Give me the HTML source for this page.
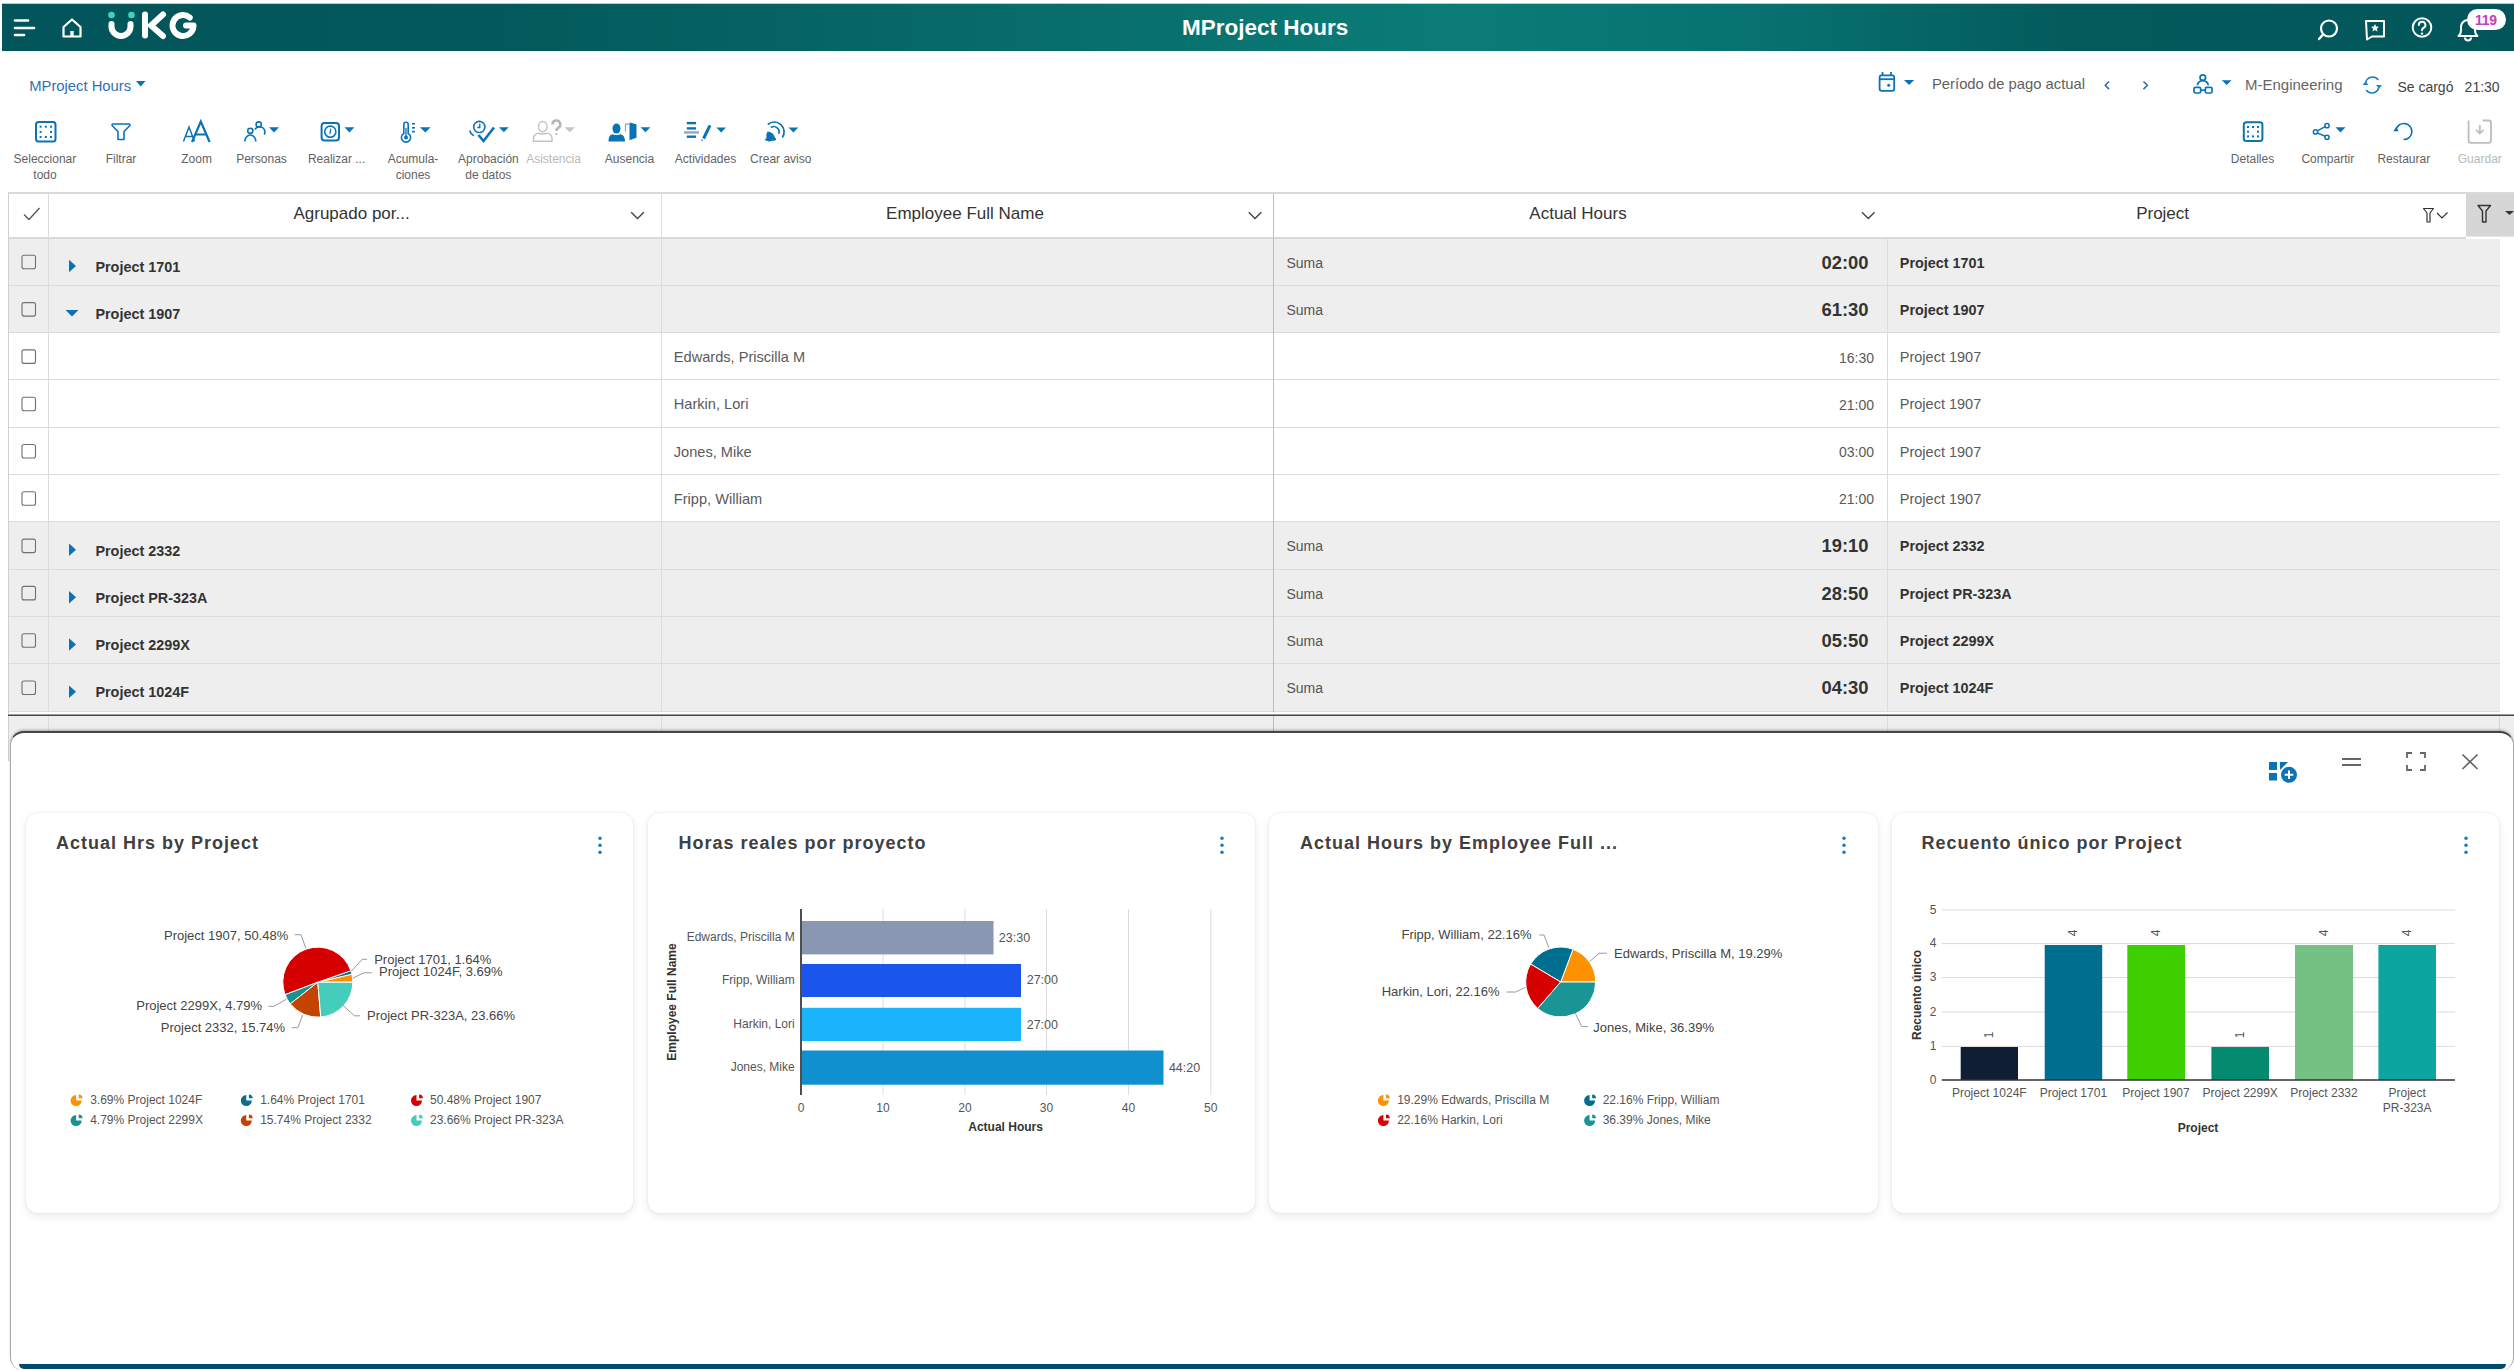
<!DOCTYPE html>
<html><head><meta charset="utf-8">
<style>
*{box-sizing:border-box}
html,body{margin:0;padding:0;width:2514px;height:1370px;overflow:hidden;background:#fff;font-family:"Liberation Sans",sans-serif;color:#333}
.a{position:absolute}
.t{position:absolute;white-space:nowrap;line-height:1}
#hdr{position:absolute;left:2px;top:4px;width:2512px;height:47px;box-shadow:0 -1px 0 rgba(120,150,150,.5);background:linear-gradient(90deg,#02555a 0%,#03595b 20%,#0b7c77 58%,#077270 70%,#035b5c 82%,#02565a 100%)}
.lbl{position:absolute;white-space:nowrap;font-size:12px;color:#555;line-height:16px;text-align:center}
.ic{position:absolute}
</style></head><body>
<!-- HEADER -->
<div id="hdr"></div>
<svg class="a" style="left:0;top:0" width="2514" height="52" viewBox="0 0 2514 52">
  <!-- hamburger -->
  <g stroke="#fff" stroke-width="2.6" stroke-linecap="round">
    <line x1="15" y1="20.5" x2="28" y2="20.5"/>
    <line x1="15" y1="28" x2="34" y2="28"/>
    <line x1="15" y1="35" x2="24" y2="35"/>
  </g>
  <!-- home -->
  <path d="M63.5 36.5 V27 L72 19.5 L80.5 27 V36.5 Z" fill="none" stroke="#fff" stroke-width="2.2" stroke-linejoin="round"/>
  <rect x="70.3" y="31" width="3.4" height="6" fill="#fff"/>
  <!-- UKG logo -->
  <circle cx="111.5" cy="15" r="3.3" fill="#3fd3bb"/>
  <circle cx="131.5" cy="15" r="3.3" fill="#3fd3bb"/>
  <path d="M111.5 24 V26.5 A9.5 9.5 0 0 0 130.5 26.5 V24" fill="none" stroke="#fff" stroke-width="6" stroke-linecap="round"/>
  <line x1="145" y1="14.5" x2="145" y2="35.5" stroke="#fff" stroke-width="6" stroke-linecap="round"/>
  <path d="M163 14.5 L151 25.5 L163 36" fill="none" stroke="#fff" stroke-width="6" stroke-linecap="round" stroke-linejoin="round"/>
  <path d="M189.75 17.46 A10.5 10.5 0 1 0 193.5 25.5 H186" fill="none" stroke="#fff" stroke-width="6" stroke-linecap="round" stroke-linejoin="round"/>
  <!-- right icons -->
  <circle cx="2329" cy="28.5" r="8" fill="none" stroke="#fff" stroke-width="2.2"/>
  <line x1="2323" y1="34.5" x2="2319" y2="39" stroke="#fff" stroke-width="2.4" stroke-linecap="round"/>
  <path d="M2366 21 H2384 V36.5 H2372 L2367 39.5 Z" fill="none" stroke="#fff" stroke-width="2" stroke-linejoin="round"/>
  <path d="M2375 24 l1.2 2.5 2.7 .3 -2 1.9 .5 2.7 -2.4 -1.3 -2.4 1.3 .5 -2.7 -2 -1.9 2.7 -.3z" fill="#fff"/>
  <circle cx="2422" cy="27.5" r="9.3" fill="none" stroke="#fff" stroke-width="2"/>
  <path d="M2418.8 25 a3.3 3.3 0 1 1 4.6 3 c-1 .5 -1.4 1.1 -1.4 2.3" fill="none" stroke="#fff" stroke-width="2" stroke-linecap="round"/>
  <circle cx="2422" cy="33.6" r="1.2" fill="#fff"/>
  <path d="M2458.5 36 c2 -1.5 2.5 -3 2.5 -6 v-3 a7 7 0 0 1 14 0 v3 c0 3 .5 4.5 2.5 6 z" fill="none" stroke="#fff" stroke-width="2" stroke-linejoin="round"/>
  <path d="M2465 37.5 a3 3 0 0 0 6 0" fill="none" stroke="#fff" stroke-width="2"/>
  <rect x="2467" y="9" width="39" height="21" rx="10.5" fill="#fff"/>
</svg>
<div class="t" style="left:1182px;top:17px;font-size:22.5px;font-weight:700;color:#fff">MProject Hours</div>
<div class="t" style="left:2475px;top:12.5px;font-size:14px;font-weight:700;color:#c93bb8;letter-spacing:-0.3px">119</div>

<!-- TOOLBAR -->
<svg class="a" style="left:0;top:60px" width="2514" height="95" viewBox="0 60 2514 95">
<g fill="#0a73b5">
  <path d="M136 81 h9.5 l-4.75 5.5z"/>
  <!-- row1 triangles -->
  <path d="M1904 80 h10.2 l-5.1 5z"/>
  <path d="M2221.8 80.2 h9.8 l-4.9 4.8z"/>
  <!-- row2 triangles -->
  <path d="M269 127.3 h10 l-5 5.3z"/>
  <path d="M344.5 127.3 h9.8 l-4.9 5.3z"/>
  <path d="M420 127.3 h10.6 l-5.3 5.3z"/>
  <path d="M499 127.3 h9.7 l-4.85 5z"/>
  <path d="M640.6 127.3 h9.7 l-4.85 5z"/>
  <path d="M716.4 127.5 h9.6 l-4.8 5z"/>
  <path d="M788.5 127.5 h9.8 l-4.9 5z"/>
  <path d="M2335.5 127.3 h10 l-5 5.2z"/>
</g>
<path d="M564.5 127.3 h10.5 l-5.25 5z" fill="#c4c4c4"/>
<!-- calendar -->
<g stroke="#0a73b5" fill="none" stroke-width="1.8">
  <rect x="1879.6" y="75.4" width="14.6" height="15.4" rx="2"/>
  <line x1="1879.6" y1="79.2" x2="1894.2" y2="79.2"/>
  <line x1="1882.5" y1="72" x2="1882.5" y2="75.5"/>
  <line x1="1891" y1="72" x2="1891" y2="75.5"/>
</g>
<circle cx="1888.7" cy="85.2" r="1.5" fill="#0a73b5"/>
<!-- chevrons -->
<path d="M2109 81.5 l-3.8 3.8 l3.8 3.8" fill="none" stroke="#2d6aa8" stroke-width="1.5"/>
<path d="M2143.5 81.5 l3.8 3.8 l-3.8 3.8" fill="none" stroke="#2d6aa8" stroke-width="1.5"/>
<!-- org -->
<g stroke="#0a73b5" fill="none" stroke-width="1.7">
  <circle cx="2202.8" cy="77.6" r="2.8"/>
  <path d="M2197.4 85.2 a5.4 4.5 0 0 1 10.8 0"/>
  <rect x="2194" y="87.4" width="6.6" height="5.6" rx="1.2"/>
  <rect x="2205.4" y="87.4" width="6.6" height="5.6" rx="1.2"/>
  <line x1="2200.6" y1="90.2" x2="2205.4" y2="90.2"/>
</g>
<!-- refresh -->
<g stroke="#1a7fc0" fill="none" stroke-width="1.5">
  <path d="M2365.5 83 a7.2 7.2 0 0 1 12.8 -3"/>
  <path d="M2379 87 a7.2 7.2 0 0 1 -12.8 3"/>
</g>
<path d="M2362.5 85 l3 -3.5 l3 3.5z" fill="#1a7fc0"/>
<path d="M2376 85 l3 3.5 l3 -3.5z" fill="#1a7fc0"/>
<!-- select all -->
<g stroke="#0a73b5" fill="none" stroke-width="2">
  <rect x="36" y="122" width="19.5" height="19.5" rx="2.5"/>
  <rect x="2243.8" y="122.2" width="18.6" height="18.8" rx="2.5"/>
</g>
<g fill="#0a73b5">
  <rect x="39.6" y="125.7" width="2" height="2"/><rect x="44.8" y="125.7" width="2" height="2"/><rect x="50" y="125.7" width="2" height="2"/>
  <rect x="39.6" y="130.9" width="2" height="2"/><rect x="50" y="130.9" width="2" height="2"/>
  <rect x="39.6" y="136" width="2" height="2"/><rect x="44.8" y="136" width="2" height="2"/><rect x="50" y="136" width="2" height="2"/>
  <rect x="2247" y="126" width="2" height="2"/><rect x="2252" y="126" width="2" height="2"/><rect x="2257" y="126" width="2" height="2"/>
  <rect x="2247" y="130.7" width="2" height="2"/><rect x="2257" y="130.7" width="2" height="2"/>
  <rect x="2247" y="135.4" width="2" height="2"/><rect x="2252" y="135.4" width="2" height="2"/><rect x="2257" y="135.4" width="2" height="2"/>
</g>
<!-- filter -->
<path d="M113 124 h16 a1 1 0 0 1 .7 1.7 l-5.7 5.8 v8 h-6 v-8 l-5.7 -5.8 a1 1 0 0 1 .7 -1.7z" fill="none" stroke="#0a73b5" stroke-width="1.6" stroke-linejoin="round"/>
<!-- zoom AA -->
<path d="M183.5 141.5 L189 127 L194.5 141.5 M185.3 136.5 h7.4" fill="none" stroke="#0a73b5" stroke-width="1.5"/>
<path d="M192 142 L200.8 121.5 L209.6 142 M195 134.5 h11.6" fill="none" stroke="#0a73b5" stroke-width="2.2"/>
<!-- personas -->
<g stroke="#0a73b5" fill="none" stroke-width="1.6">
  <circle cx="250.3" cy="130.8" r="2.6"/>
  <path d="M244.8 141.5 a5.5 6.5 0 0 1 11 0"/>
  <circle cx="258.7" cy="124.5" r="2.6"/>
  <path d="M255 129.5 a5 5 0 0 1 9.3 5"/>
</g>
<!-- realizar -->
<rect x="321.6" y="123" width="17.4" height="17.4" rx="3" fill="none" stroke="#0a73b5" stroke-width="2"/>
<circle cx="330.3" cy="131.7" r="5.6" fill="none" stroke="#0a73b5" stroke-width="1.6"/>
<path d="M330.8 128.6 l-1 5.5" stroke="#0a73b5" stroke-width="1.2"/>
<!-- thermometer -->
<path d="M403.8 133.5 v-9 a2.2 2.2 0 0 1 4.4 0 v9 a4.6 4.6 0 1 1 -4.4 0z" fill="none" stroke="#0a73b5" stroke-width="1.6"/>
<circle cx="406" cy="137.6" r="2" fill="#0a73b5"/>
<line x1="406" y1="128" x2="406" y2="136" stroke="#0a73b5" stroke-width="1.3"/>
<g fill="#0a73b5"><rect x="412" y="123" width="3" height="1.6"/><rect x="412" y="127" width="3" height="1.6"/><rect x="412" y="130.8" width="3" height="1.6"/></g>
<!-- aprobacion -->
<g stroke="#0a73b5" fill="none" stroke-width="1.6">
  <circle cx="479.3" cy="127" r="5.6"/>
  <path d="M469.6 130.5 a9.5 9.5 0 0 0 4.2 5.3"/>
  <path d="M479.8 123.6 v3.9 h-2.6" stroke-width="1.3"/>
</g>
<path d="M477.5 134.5 l5.8 6.2 l10.7 -13.5" fill="none" stroke="#fff" stroke-width="5"/><path d="M478.5 135 l5 6 l10.5 -13.5" fill="none" stroke="#0a73b5" stroke-width="2.6"/>
<!-- asistencia -->
<g stroke="#c4c4c4" fill="none" stroke-width="1.5">
  <ellipse cx="542.8" cy="126.6" rx="4.3" ry="5.2"/>
  <path d="M533.5 141.2 v-3 a5 5 0 0 1 5 -5 c1.5 1 7 1 8.5 0 a5 5 0 0 1 5 5 v3z"/>
</g>
<path d="M552.5 124.5 a3.9 3.9 0 1 1 5.3 3.6 c-1 .5 -1.4 1.2 -1.4 3" fill="none" stroke="#b5b5b5" stroke-width="2.5"/>
<rect x="555.3" y="133" width="2" height="2" fill="#bdbdbd"/>
<!-- ausencia -->
<g fill="#0a73b5">
  <ellipse cx="616.5" cy="128.6" rx="4" ry="5"/>
  <path d="M608.5 141.5 c0 -4 1 -6.5 4 -7.2 c1.5 1 6.5 1 8 0 c3 .7 4.5 3.2 4.5 7.2z"/>
  <path d="M629.5 122.5 l7 1.8 v13.5 l-7 2.5z"/>
</g>
<path d="M625.5 131.5 v-7.3 h4" fill="none" stroke="#7da7cc" stroke-width="1.2"/>
<!-- actividades -->
<g stroke="#0a73b5" stroke-width="2.4">
  <line x1="686.8" y1="123.1" x2="696" y2="123.1"/>
  <line x1="686.8" y1="128.4" x2="696" y2="128.4"/>
  <line x1="686.8" y1="136.7" x2="696" y2="136.7"/>
</g>
<line x1="684" y1="132.4" x2="699" y2="132.4" stroke="#8ea9c6" stroke-width="2.4"/>
<line x1="710" y1="125.3" x2="703.6" y2="138.5" stroke="#0a73b5" stroke-width="3"/>
<rect x="701.3" y="139.5" width="1.6" height="1.8" fill="#5b9bd0"/>
<!-- crear aviso -->
<path d="M764.5 140 l2 -2 c-.5 -3 0 -5 1.2 -6.5 c2 .3 3.5 1 5 2 c1 1.5 2 3 2.3 4 c.8 .8 1.5 1.8 1 2.5 c-1.5 .8 -3 1 -4 .8 c-1.5 1 -3.5 1 -4.5 .2 z" fill="#0a73b5"/>
<g stroke="#0a73b5" fill="none" stroke-width="1.7">
  <path d="M771 127.5 a5.2 5.2 0 0 1 7.7 6.3"/>
  <path d="M767.8 124.5 a9.8 9.8 0 0 1 14.5 13"/>
</g>
<!-- share -->
<g stroke="#0a73b5" fill="none" stroke-width="1.5">
  <circle cx="2315.5" cy="131.9" r="2.1"/>
  <circle cx="2327" cy="125.7" r="2.1"/>
  <circle cx="2327" cy="137.3" r="2.1"/>
  <line x1="2317.3" y1="130.9" x2="2325.2" y2="126.7"/>
  <line x1="2317.3" y1="132.9" x2="2325.2" y2="136.3"/>
</g>
<!-- restaurar -->
<path d="M2396 130 a8 8 0 1 1 7.5 9.5" fill="none" stroke="#0a73b5" stroke-width="1.6"/>
<path d="M2393.3 131.3 l2.7 -4 l2.8 4z" fill="#0a73b5"/>
<!-- guardar -->
<path d="M2468.6 120.5 v20 a2.3 2.3 0 0 0 2.3 2.3 h17.8 a2.3 2.3 0 0 0 2.3 -2.3 v-17.7 a2.3 2.3 0 0 0 -2.3 -2.3 h-6" fill="none" stroke="#bdbdbd" stroke-width="1.8"/>
<path d="M2479.8 125 v8.5 M2476 129.8 l3.8 3.8 l3.8 -3.8" fill="none" stroke="#bdbdbd" stroke-width="1.8"/>
</svg>
<div class="t" style="left:29.2px;top:78.8px;font-size:14.8px;color:#2f6fb3;font-weight:400;">MProject Hours</div>
<div class="t" style="left:1932.0px;top:77.3px;font-size:14.8px;color:#606060;font-weight:400;">Período de pago actual</div>
<div class="t" style="left:2245.0px;top:77.1px;font-size:15px;color:#666;font-weight:400;">M-Engineering</div>
<div class="t" style="left:2397.4px;top:80.4px;font-size:14px;color:#444;font-weight:400;">Se cargó</div>
<div class="t" style="left:2464.6px;top:80.4px;font-size:14px;color:#444;font-weight:400;">21:30</div>
<div class="t" style="left:-105.1px;width:300px;text-align:center;top:153.3px;font-size:12px;color:#636363;font-weight:400;">Seleccionar</div>
<div class="t" style="left:-105.0px;width:300px;text-align:center;top:168.8px;font-size:12px;color:#636363;font-weight:400;">todo</div>
<div class="t" style="left:-29.0px;width:300px;text-align:center;top:153.3px;font-size:12px;color:#636363;font-weight:400;">Filtrar</div>
<div class="t" style="left:46.6px;width:300px;text-align:center;top:153.3px;font-size:12px;color:#636363;font-weight:400;">Zoom</div>
<div class="t" style="left:111.5px;width:300px;text-align:center;top:153.3px;font-size:12px;color:#636363;font-weight:400;">Personas</div>
<div class="t" style="left:186.6px;width:300px;text-align:center;top:153.3px;font-size:12px;color:#636363;font-weight:400;">Realizar ...</div>
<div class="t" style="left:263.0px;width:300px;text-align:center;top:153.3px;font-size:12px;color:#636363;font-weight:400;">Acumula-</div>
<div class="t" style="left:263.0px;width:300px;text-align:center;top:168.8px;font-size:12px;color:#636363;font-weight:400;">ciones</div>
<div class="t" style="left:338.4px;width:300px;text-align:center;top:153.3px;font-size:12px;color:#636363;font-weight:400;">Aprobación</div>
<div class="t" style="left:338.3px;width:300px;text-align:center;top:168.8px;font-size:12px;color:#636363;font-weight:400;">de datos</div>
<div class="t" style="left:479.5px;width:300px;text-align:center;top:153.3px;font-size:12px;color:#636363;font-weight:400;">Ausencia</div>
<div class="t" style="left:555.5px;width:300px;text-align:center;top:153.3px;font-size:12px;color:#636363;font-weight:400;">Actividades</div>
<div class="t" style="left:630.8px;width:300px;text-align:center;top:153.3px;font-size:12px;color:#636363;font-weight:400;">Crear aviso</div>
<div class="t" style="left:2102.5px;width:300px;text-align:center;top:153.3px;font-size:12px;color:#636363;font-weight:400;">Detalles</div>
<div class="t" style="left:2177.8px;width:300px;text-align:center;top:153.3px;font-size:12px;color:#636363;font-weight:400;">Compartir</div>
<div class="t" style="left:2253.8px;width:300px;text-align:center;top:153.3px;font-size:12px;color:#636363;font-weight:400;">Restaurar</div>
<div class="t" style="left:403.5px;width:300px;text-align:center;top:153.3px;font-size:12px;color:#b9b9b9;font-weight:400;">Asistencia</div>
<div class="t" style="left:2329.8px;width:300px;text-align:center;top:153.3px;font-size:12px;color:#b9b9b9;font-weight:400;">Guardar</div>
<!-- TABLE -->
<div class="a" style="left:8px;top:192px;width:2506px;height:2px;background:#d9d9d9"></div>
<div class="a" style="left:8px;top:237px;width:2458px;height:2px;background:#d9d9d9"></div>
<div class="a" style="left:2466px;top:194px;width:48px;height:42px;background:#d6d6d6"></div>
<div class="a" style="left:2466px;top:236px;width:48px;height:1px;background:#e6e6e6"></div>
<div class="a" style="left:9px;top:239px;width:2491px;height:47px;background:#eeeeee"></div>
<div class="a" style="left:9px;top:285px;width:2491px;height:1px;background:#dcdcdc"></div>
<div class="a" style="left:9px;top:286px;width:2491px;height:47px;background:#eeeeee"></div>
<div class="a" style="left:9px;top:332px;width:2491px;height:1px;background:#dcdcdc"></div>
<div class="a" style="left:9px;top:333px;width:2491px;height:47px;background:#ffffff"></div>
<div class="a" style="left:9px;top:379px;width:2491px;height:1px;background:#dcdcdc"></div>
<div class="a" style="left:9px;top:380px;width:2491px;height:48px;background:#ffffff"></div>
<div class="a" style="left:9px;top:427px;width:2491px;height:1px;background:#dcdcdc"></div>
<div class="a" style="left:9px;top:428px;width:2491px;height:47px;background:#ffffff"></div>
<div class="a" style="left:9px;top:474px;width:2491px;height:1px;background:#dcdcdc"></div>
<div class="a" style="left:9px;top:475px;width:2491px;height:47px;background:#ffffff"></div>
<div class="a" style="left:9px;top:521px;width:2491px;height:1px;background:#dcdcdc"></div>
<div class="a" style="left:9px;top:522px;width:2491px;height:48px;background:#eeeeee"></div>
<div class="a" style="left:9px;top:569px;width:2491px;height:1px;background:#dcdcdc"></div>
<div class="a" style="left:9px;top:570px;width:2491px;height:47px;background:#eeeeee"></div>
<div class="a" style="left:9px;top:616px;width:2491px;height:1px;background:#dcdcdc"></div>
<div class="a" style="left:9px;top:617px;width:2491px;height:47px;background:#eeeeee"></div>
<div class="a" style="left:9px;top:663px;width:2491px;height:1px;background:#dcdcdc"></div>
<div class="a" style="left:9px;top:664px;width:2491px;height:48px;background:#eeeeee"></div>
<div class="a" style="left:9px;top:711px;width:2491px;height:1px;background:#dcdcdc"></div>
<div class="a" style="left:9px;top:716px;width:2505px;height:46px;background:#eeeeee"></div>
<div class="a" style="left:2499px;top:716px;width:1px;height:46px;background:#d6d6d6"></div>
<div class="a" style="left:8px;top:193px;width:1px;height:568px;background:#d0d0d0"></div>
<div class="a" style="left:48px;top:194px;width:1px;height:567px;background:#dcdcdc"></div>
<div class="a" style="left:661px;top:194px;width:1px;height:567px;background:#dcdcdc"></div>
<div class="a" style="left:1273px;top:194px;width:1px;height:567px;background:#bdbdbd"></div>
<div class="a" style="left:1887px;top:239px;width:1px;height:522px;background:#dcdcdc"></div>
<div class="a" style="left:9px;top:712px;width:2505px;height:2px;background:#fff"></div>
<div class="a" style="left:8px;top:714px;width:2506px;height:1px;background:#9a9a9a"></div>
<div class="a" style="left:8px;top:715px;width:2506px;height:1px;background:#484848"></div>
<div class="t" style="left:201.6px;width:300px;text-align:center;top:204.6px;font-size:17px;color:#333;font-weight:400;">Agrupado por...</div>
<div class="t" style="left:815.0px;width:300px;text-align:center;top:204.6px;font-size:17px;color:#333;font-weight:400;">Employee Full Name</div>
<div class="t" style="left:1428.0px;width:300px;text-align:center;top:204.6px;font-size:17px;color:#333;font-weight:400;">Actual Hours</div>
<div class="t" style="left:2012.6px;width:300px;text-align:center;top:204.6px;font-size:17px;color:#333;font-weight:400;">Project</div>
<svg class="a" style="left:0;top:190px" width="2514" height="50" viewBox="0 190 2514 50"><path d="M24 214.5 L29 219.5 L39.5 208" fill="none" stroke="#555" stroke-width="1.3"/><path d="M631.2 212.3 L637.5 218.6 L643.8 212.3" fill="none" stroke="#444" stroke-width="1.4"/><path d="M1248.7 212.3 L1255 218.6 L1261.3 212.3" fill="none" stroke="#444" stroke-width="1.4"/><path d="M1862.0 212.3 L1868.3 218.6 L1874.6 212.3" fill="none" stroke="#444" stroke-width="1.4"/><path d="M2423.5 208.5 h10 l-3.5 4.5 v9 h-3 v-9z" fill="none" stroke="#333" stroke-width="1.2" stroke-linejoin="round"/><path d="M2437 213 l5 5 l5.5 -5.5" fill="none" stroke="#333" stroke-width="1.2"/><path d="M2478 205.5 h12.5 l-4.5 5.5 v11 h-3.5 v-11z" fill="none" stroke="#333" stroke-width="1.4" stroke-linejoin="round"/><path d="M2505 211 h9 l-4.5 4z" fill="#333"/></svg>
<svg class="a" style="left:0;top:230px" width="200" height="500" viewBox="0 230 200 500"><rect x="22" y="255.3" width="13.5" height="13.5" rx="2" fill="none" stroke="#707070" stroke-width="1.1"/><path d="M69 259.8 v12.5 l7 -6.25z" fill="#0a73b5"/><rect x="22" y="302.6" width="13.5" height="13.5" rx="2" fill="none" stroke="#707070" stroke-width="1.1"/><path d="M65.5 310.0 h13 l-6.5 6.5z" fill="#0a73b5"/><rect x="22" y="349.9" width="13.5" height="13.5" rx="2" fill="none" stroke="#707070" stroke-width="1.1"/><rect x="22" y="397.2" width="13.5" height="13.5" rx="2" fill="none" stroke="#707070" stroke-width="1.1"/><rect x="22" y="444.5" width="13.5" height="13.5" rx="2" fill="none" stroke="#707070" stroke-width="1.1"/><rect x="22" y="491.8" width="13.5" height="13.5" rx="2" fill="none" stroke="#707070" stroke-width="1.1"/><rect x="22" y="539.1" width="13.5" height="13.5" rx="2" fill="none" stroke="#707070" stroke-width="1.1"/><path d="M69 543.6 v12.5 l7 -6.25z" fill="#0a73b5"/><rect x="22" y="586.4" width="13.5" height="13.5" rx="2" fill="none" stroke="#707070" stroke-width="1.1"/><path d="M69 590.9 v12.5 l7 -6.25z" fill="#0a73b5"/><rect x="22" y="633.7" width="13.5" height="13.5" rx="2" fill="none" stroke="#707070" stroke-width="1.1"/><path d="M69 638.2 v12.5 l7 -6.25z" fill="#0a73b5"/><rect x="22" y="681.0" width="13.5" height="13.5" rx="2" fill="none" stroke="#707070" stroke-width="1.1"/><path d="M69 685.5 v12.5 l7 -6.25z" fill="#0a73b5"/></svg>
<div class="t" style="left:95.4px;top:259.7px;font-size:14.4px;color:#333;font-weight:700;">Project 1701</div>
<div class="t" style="left:1286.5px;top:255.6px;font-size:14px;color:#555;font-weight:400;">Suma</div>
<div class="t" style="left:1568.5px;width:300px;text-align:right;top:253.5px;font-size:18.4px;color:#333;font-weight:700;">02:00</div>
<div class="t" style="left:1899.8px;top:255.5px;font-size:14.4px;color:#333;font-weight:700;">Project 1701</div>
<div class="t" style="left:95.4px;top:307.0px;font-size:14.4px;color:#333;font-weight:700;">Project 1907</div>
<div class="t" style="left:1286.5px;top:302.9px;font-size:14px;color:#555;font-weight:400;">Suma</div>
<div class="t" style="left:1568.5px;width:300px;text-align:right;top:300.8px;font-size:18.4px;color:#333;font-weight:700;">61:30</div>
<div class="t" style="left:1899.8px;top:302.8px;font-size:14.4px;color:#333;font-weight:700;">Project 1907</div>
<div class="t" style="left:673.8px;top:350.0px;font-size:14.6px;color:#5a5a5a;font-weight:400;">Edwards, Priscilla M</div>
<div class="t" style="left:1574.0px;width:300px;text-align:right;top:350.5px;font-size:14px;color:#5a5a5a;font-weight:400;">16:30</div>
<div class="t" style="left:1899.8px;top:350.1px;font-size:14.5px;color:#5a5a5a;font-weight:400;">Project 1907</div>
<div class="t" style="left:673.8px;top:397.3px;font-size:14.6px;color:#5a5a5a;font-weight:400;">Harkin, Lori</div>
<div class="t" style="left:1574.0px;width:300px;text-align:right;top:397.8px;font-size:14px;color:#5a5a5a;font-weight:400;">21:00</div>
<div class="t" style="left:1899.8px;top:397.4px;font-size:14.5px;color:#5a5a5a;font-weight:400;">Project 1907</div>
<div class="t" style="left:673.8px;top:444.6px;font-size:14.6px;color:#5a5a5a;font-weight:400;">Jones, Mike</div>
<div class="t" style="left:1574.0px;width:300px;text-align:right;top:445.1px;font-size:14px;color:#5a5a5a;font-weight:400;">03:00</div>
<div class="t" style="left:1899.8px;top:444.7px;font-size:14.5px;color:#5a5a5a;font-weight:400;">Project 1907</div>
<div class="t" style="left:673.8px;top:491.9px;font-size:14.6px;color:#5a5a5a;font-weight:400;">Fripp, William</div>
<div class="t" style="left:1574.0px;width:300px;text-align:right;top:492.4px;font-size:14px;color:#5a5a5a;font-weight:400;">21:00</div>
<div class="t" style="left:1899.8px;top:492.0px;font-size:14.5px;color:#5a5a5a;font-weight:400;">Project 1907</div>
<div class="t" style="left:95.4px;top:543.5px;font-size:14.4px;color:#333;font-weight:700;">Project 2332</div>
<div class="t" style="left:1286.5px;top:539.4px;font-size:14px;color:#555;font-weight:400;">Suma</div>
<div class="t" style="left:1568.5px;width:300px;text-align:right;top:537.3px;font-size:18.4px;color:#333;font-weight:700;">19:10</div>
<div class="t" style="left:1899.8px;top:539.3px;font-size:14.4px;color:#333;font-weight:700;">Project 2332</div>
<div class="t" style="left:95.4px;top:590.8px;font-size:14.4px;color:#333;font-weight:700;">Project PR-323A</div>
<div class="t" style="left:1286.5px;top:586.7px;font-size:14px;color:#555;font-weight:400;">Suma</div>
<div class="t" style="left:1568.5px;width:300px;text-align:right;top:584.6px;font-size:18.4px;color:#333;font-weight:700;">28:50</div>
<div class="t" style="left:1899.8px;top:586.6px;font-size:14.4px;color:#333;font-weight:700;">Project PR-323A</div>
<div class="t" style="left:95.4px;top:638.1px;font-size:14.4px;color:#333;font-weight:700;">Project 2299X</div>
<div class="t" style="left:1286.5px;top:634.0px;font-size:14px;color:#555;font-weight:400;">Suma</div>
<div class="t" style="left:1568.5px;width:300px;text-align:right;top:631.9px;font-size:18.4px;color:#333;font-weight:700;">05:50</div>
<div class="t" style="left:1899.8px;top:633.9px;font-size:14.4px;color:#333;font-weight:700;">Project 2299X</div>
<div class="t" style="left:95.4px;top:685.4px;font-size:14.4px;color:#333;font-weight:700;">Project 1024F</div>
<div class="t" style="left:1286.5px;top:681.3px;font-size:14px;color:#555;font-weight:400;">Suma</div>
<div class="t" style="left:1568.5px;width:300px;text-align:right;top:679.2px;font-size:18.4px;color:#333;font-weight:700;">04:30</div>
<div class="t" style="left:1899.8px;top:681.2px;font-size:14.4px;color:#333;font-weight:700;">Project 1024F</div>
<!-- PANEL -->
<div class="a" style="left:10px;top:731px;width:2504px;height:640px;background:#fff;border-radius:14px;border-top:2px solid #454545;border-left:1px solid #a8a8a8;border-right:1px solid #a8a8a8;box-shadow:0 -2px 3px -1px rgba(0,0,0,.3)"></div>
<div class="a" style="left:19px;top:1364px;width:2487px;height:5px;background:#004b6e;border-radius:0 0 6px 6px"></div>
<svg class="a" style="left:2250px;top:740px" width="264" height="60" viewBox="2250 740 264 60">
<g fill="#0a73b5">
<rect x="2269" y="762" width="8" height="8"/>
<rect x="2269" y="773" width="8" height="7.5"/>
<path d="M2280 762 h8 l-8 8z"/>
<circle cx="2289" cy="774.8" r="8"/>
</g>
<circle cx="2289" cy="774.8" r="6.2" fill="#0a73b5" stroke="#fff" stroke-width="0"/>
<path d="M2289 770.5 v8.6 M2284.7 774.8 h8.6" stroke="#fff" stroke-width="2"/>
<g stroke="#666" stroke-width="2">
<line x1="2342" y1="759" x2="2361" y2="759"/>
<line x1="2342" y1="765" x2="2361" y2="765"/>
</g>
<g stroke="#666" stroke-width="1.8" fill="none">
<path d="M2407 758 v-5 h5 M2420 753 h5 v5 M2425 765 v5 h-5 M2412 770 h-5 v-5"/>
</g>
<path d="M2462.5 754.5 l15 14.5 M2477.5 754.5 l-15 14.5" stroke="#666" stroke-width="1.7"/>
</svg>
<div class="a" style="left:26px;top:813px;width:607px;height:400px;background:#fff;border-radius:12px;box-shadow:0 0 2px rgba(0,0,0,.10),0 3px 8px rgba(0,0,0,.09)"></div>
<div class="a" style="left:648px;top:813px;width:607px;height:400px;background:#fff;border-radius:12px;box-shadow:0 0 2px rgba(0,0,0,.10),0 3px 8px rgba(0,0,0,.09)"></div>
<div class="a" style="left:1269px;top:813px;width:609px;height:400px;background:#fff;border-radius:12px;box-shadow:0 0 2px rgba(0,0,0,.10),0 3px 8px rgba(0,0,0,.09)"></div>
<div class="a" style="left:1892px;top:813px;width:607px;height:400px;background:#fff;border-radius:12px;box-shadow:0 0 2px rgba(0,0,0,.10),0 3px 8px rgba(0,0,0,.09)"></div>
<div class="t" style="left:56.0px;top:834.2px;font-size:18px;color:#404040;font-weight:700;letter-spacing:1px">Actual Hrs by Project</div>
<div class="t" style="left:678.5px;top:834.2px;font-size:18px;color:#404040;font-weight:700;letter-spacing:1px">Horas reales por proyecto</div>
<div class="t" style="left:1300.0px;top:834.2px;font-size:18px;color:#404040;font-weight:700;letter-spacing:1px">Actual Hours by Employee Full ...</div>
<div class="t" style="left:1921.4px;top:834.2px;font-size:18px;color:#404040;font-weight:700;letter-spacing:1px">Recuento único por Project</div>
<svg class="a" style="left:0;top:800px" width="2514" height="430" viewBox="0 800 2514 430"><circle cx="600" cy="838.3" r="1.7" fill="#1a7ac0"/><circle cx="600" cy="845.3" r="1.7" fill="#1a7ac0"/><circle cx="600" cy="852.3" r="1.7" fill="#1a7ac0"/><circle cx="1222" cy="838.3" r="1.7" fill="#1a7ac0"/><circle cx="1222" cy="845.3" r="1.7" fill="#1a7ac0"/><circle cx="1222" cy="852.3" r="1.7" fill="#1a7ac0"/><circle cx="1844" cy="838.3" r="1.7" fill="#1a7ac0"/><circle cx="1844" cy="845.3" r="1.7" fill="#1a7ac0"/><circle cx="1844" cy="852.3" r="1.7" fill="#1a7ac0"/><circle cx="2466" cy="838.3" r="1.7" fill="#1a7ac0"/><circle cx="2466" cy="845.3" r="1.7" fill="#1a7ac0"/><circle cx="2466" cy="852.3" r="1.7" fill="#1a7ac0"/><path d="M317.80 982.20 L352.80 982.20 A35 35 0 0 0 351.86 974.16 Z" fill="#ff9000" stroke="#fff" stroke-width="1"/><path d="M317.80 982.20 L351.86 974.16 A35 35 0 0 0 350.86 970.70 Z" fill="#0d6e8c" stroke="#fff" stroke-width="1"/><path d="M317.80 982.20 L350.86 970.70 A35 35 0 1 0 285.11 994.69 Z" fill="#d60000" stroke="#fff" stroke-width="1"/><path d="M317.80 982.20 L285.11 994.69 A35 35 0 0 0 290.28 1003.83 Z" fill="#1a9191" stroke="#fff" stroke-width="1"/><path d="M317.80 982.20 L290.28 1003.83 A35 35 0 0 0 320.74 1017.08 Z" fill="#c24400" stroke="#fff" stroke-width="1"/><path d="M317.80 982.20 L320.74 1017.08 A35 35 0 0 0 352.80 982.20 Z" fill="#45cdbb" stroke="#fff" stroke-width="1"/><path d="M305.8 948.2 L301 934.7 L294.7 934.7" fill="none" stroke="#9a9a9a" stroke-width="1"/><path d="M351.2 971.3 L362.3 959.3 L367 959.3" fill="none" stroke="#9a9a9a" stroke-width="1"/><path d="M352.8 978.1 L363.9 972.8 L371.8 972.8" fill="none" stroke="#9a9a9a" stroke-width="1"/><path d="M343.2 1005.5 L354.3 1015.8 L360 1015.8" fill="none" stroke="#9a9a9a" stroke-width="1"/><path d="M286.7 999.1 L274 1006.3 L268.4 1006.3" fill="none" stroke="#9a9a9a" stroke-width="1"/><path d="M302.6 1015 L297.9 1027.7 L291.5 1027.7" fill="none" stroke="#9a9a9a" stroke-width="1"/><path d="M76.1 1100.6 V1095.1 A5.5 5.5 0 1 0 81.6 1100.6 Z" fill="#ff9000"/><path d="M78.69999999999999 1098.1999999999998 V1094.3999999999999 A3.8 3.8 0 0 1 82.49999999999999 1098.1999999999998 Z" fill="#ff9000"/><path d="M246.3 1100.6 V1095.1 A5.5 5.5 0 1 0 251.8 1100.6 Z" fill="#0d6e8c"/><path d="M248.9 1098.1999999999998 V1094.3999999999999 A3.8 3.8 0 0 1 252.70000000000002 1098.1999999999998 Z" fill="#0d6e8c"/><path d="M416.5 1100.6 V1095.1 A5.5 5.5 0 1 0 422.0 1100.6 Z" fill="#d60000"/><path d="M419.1 1098.1999999999998 V1094.3999999999999 A3.8 3.8 0 0 1 422.90000000000003 1098.1999999999998 Z" fill="#d60000"/><path d="M76.1 1120.6 V1115.1 A5.5 5.5 0 1 0 81.6 1120.6 Z" fill="#1a9191"/><path d="M78.69999999999999 1118.1999999999998 V1114.3999999999999 A3.8 3.8 0 0 1 82.49999999999999 1118.1999999999998 Z" fill="#1a9191"/><path d="M246.3 1120.6 V1115.1 A5.5 5.5 0 1 0 251.8 1120.6 Z" fill="#c24400"/><path d="M248.9 1118.1999999999998 V1114.3999999999999 A3.8 3.8 0 0 1 252.70000000000002 1118.1999999999998 Z" fill="#c24400"/><path d="M416.5 1120.6 V1115.1 A5.5 5.5 0 1 0 422.0 1120.6 Z" fill="#45cdbb"/><path d="M419.1 1118.1999999999998 V1114.3999999999999 A3.8 3.8 0 0 1 422.90000000000003 1118.1999999999998 Z" fill="#45cdbb"/><path d="M1560.70 982.00 L1595.70 982.00 A35 35 0 0 0 1572.99 949.23 Z" fill="#ff9000" stroke="#fff" stroke-width="1"/><path d="M1560.70 982.00 L1572.99 949.23 A35 35 0 0 0 1530.63 964.09 Z" fill="#006e8f" stroke="#fff" stroke-width="1"/><path d="M1560.70 982.00 L1530.63 964.09 A35 35 0 0 0 1537.74 1008.41 Z" fill="#d60000" stroke="#fff" stroke-width="1"/><path d="M1560.70 982.00 L1537.74 1008.41 A35 35 0 0 0 1595.70 982.00 Z" fill="#1a9595" stroke="#fff" stroke-width="1"/><path d="M1548.8 947.5 L1544 935 L1539.3 935" fill="none" stroke="#9a9a9a" stroke-width="1"/><path d="M1589.6 961.6 L1599 953.2 L1606.8 953.2" fill="none" stroke="#9a9a9a" stroke-width="1"/><path d="M1525.2 987.4 L1515.8 992 L1506.4 992" fill="none" stroke="#9a9a9a" stroke-width="1"/><path d="M1575.4 1013.4 L1581.7 1026.6 L1588 1026.6" fill="none" stroke="#9a9a9a" stroke-width="1"/><path d="M1383.4 1100.6 V1095.1 A5.5 5.5 0 1 0 1388.9 1100.6 Z" fill="#ff9000"/><path d="M1386.0 1098.1999999999998 V1094.3999999999999 A3.8 3.8 0 0 1 1389.8 1098.1999999999998 Z" fill="#ff9000"/><path d="M1589.6 1100.6 V1095.1 A5.5 5.5 0 1 0 1595.1 1100.6 Z" fill="#006e8f"/><path d="M1592.1999999999998 1098.1999999999998 V1094.3999999999999 A3.8 3.8 0 0 1 1595.9999999999998 1098.1999999999998 Z" fill="#006e8f"/><path d="M1383.4 1120.6 V1115.1 A5.5 5.5 0 1 0 1388.9 1120.6 Z" fill="#d60000"/><path d="M1386.0 1118.1999999999998 V1114.3999999999999 A3.8 3.8 0 0 1 1389.8 1118.1999999999998 Z" fill="#d60000"/><path d="M1589.6 1120.6 V1115.1 A5.5 5.5 0 1 0 1595.1 1120.6 Z" fill="#1a9595"/><path d="M1592.1999999999998 1118.1999999999998 V1114.3999999999999 A3.8 3.8 0 0 1 1595.9999999999998 1118.1999999999998 Z" fill="#1a9595"/><line x1="883" y1="909" x2="883" y2="1095" stroke="#dcdcdc" stroke-width="1"/><line x1="965" y1="909" x2="965" y2="1095" stroke="#dcdcdc" stroke-width="1"/><line x1="1046.5" y1="909" x2="1046.5" y2="1095" stroke="#dcdcdc" stroke-width="1"/><line x1="1128.5" y1="909" x2="1128.5" y2="1095" stroke="#dcdcdc" stroke-width="1"/><line x1="1210.8" y1="909" x2="1210.8" y2="1095" stroke="#dcdcdc" stroke-width="1"/><rect x="802" y="921" width="191.5" height="33.39999999999998" fill="#8a97b3"/><rect x="802" y="964" width="219" height="33" fill="#1a56eb"/><rect x="802" y="1007.8" width="219" height="33.200000000000045" fill="#1ab4fa"/><rect x="802" y="1050.5" width="361.5" height="34.200000000000045" fill="#1190cf"/><line x1="801" y1="909" x2="801" y2="1095" stroke="#222" stroke-width="1.6"/><line x1="1941.8" y1="909.9" x2="2455" y2="909.9" stroke="#dcdcdc" stroke-width="1"/><line x1="1941.8" y1="943.6" x2="2455" y2="943.6" stroke="#dcdcdc" stroke-width="1"/><line x1="1941.8" y1="977.5" x2="2455" y2="977.5" stroke="#dcdcdc" stroke-width="1"/><line x1="1941.8" y1="1012" x2="2455" y2="1012" stroke="#dcdcdc" stroke-width="1"/><line x1="1941.8" y1="1046.4" x2="2455" y2="1046.4" stroke="#dcdcdc" stroke-width="1"/><rect x="1960.7" y="1047" width="57.299999999999955" height="33" fill="#0f1e33"/><rect x="2044.7" y="945" width="57.49999999999977" height="135" fill="#006e8f"/><rect x="2127.3" y="945" width="57.69999999999982" height="135" fill="#3ecf00"/><rect x="2211.4" y="1047" width="57.59999999999991" height="33" fill="#048a6e"/><rect x="2295" y="945" width="58" height="135" fill="#75c083"/><rect x="2378.4" y="945" width="57.59999999999991" height="135" fill="#0ca5a0"/><line x1="1941.8" y1="1080" x2="2455" y2="1080" stroke="#333" stroke-width="1.4"/></svg>
<div class="t" style="left:-11.7px;width:300px;text-align:right;top:929.4px;font-size:13px;color:#444;font-weight:400;">Project 1907, 50.48%</div>
<div class="t" style="left:374.2px;top:952.5px;font-size:13px;color:#444;font-weight:400;">Project 1701, 1.64%</div>
<div class="t" style="left:379.0px;top:965.2px;font-size:13px;color:#444;font-weight:400;">Project 1024F, 3.69%</div>
<div class="t" style="left:367.0px;top:1009.0px;font-size:13px;color:#444;font-weight:400;">Project PR-323A, 23.66%</div>
<div class="t" style="left:-38.0px;width:300px;text-align:right;top:999.4px;font-size:13px;color:#444;font-weight:400;">Project 2299X, 4.79%</div>
<div class="t" style="left:-14.9px;width:300px;text-align:right;top:1021.0px;font-size:13px;color:#444;font-weight:400;">Project 2332, 15.74%</div>
<div class="t" style="left:90.2px;top:1094.4px;font-size:12px;color:#555;font-weight:400;">3.69% Project 1024F</div>
<div class="t" style="left:260.2px;top:1094.4px;font-size:12px;color:#555;font-weight:400;">1.64% Project 1701</div>
<div class="t" style="left:430.0px;top:1094.4px;font-size:12px;color:#555;font-weight:400;">50.48% Project 1907</div>
<div class="t" style="left:90.2px;top:1114.4px;font-size:12px;color:#555;font-weight:400;">4.79% Project 2299X</div>
<div class="t" style="left:260.2px;top:1114.4px;font-size:12px;color:#555;font-weight:400;">15.74% Project 2332</div>
<div class="t" style="left:430.0px;top:1114.4px;font-size:12px;color:#555;font-weight:400;">23.66% Project PR-323A</div>
<div class="t" style="left:1231.5px;width:300px;text-align:right;top:928.0px;font-size:13px;color:#444;font-weight:400;">Fripp, William, 22.16%</div>
<div class="t" style="left:1614.0px;top:947.0px;font-size:13px;color:#444;font-weight:400;">Edwards, Priscilla M, 19.29%</div>
<div class="t" style="left:1199.5px;width:300px;text-align:right;top:984.6px;font-size:13px;color:#444;font-weight:400;">Harkin, Lori, 22.16%</div>
<div class="t" style="left:1593.3px;top:1020.7px;font-size:13px;color:#444;font-weight:400;">Jones, Mike, 36.39%</div>
<div class="t" style="left:1397.2px;top:1094.4px;font-size:12px;color:#555;font-weight:400;">19.29% Edwards, Priscilla M</div>
<div class="t" style="left:1602.7px;top:1094.4px;font-size:12px;color:#555;font-weight:400;">22.16% Fripp, William</div>
<div class="t" style="left:1397.2px;top:1114.4px;font-size:12px;color:#555;font-weight:400;">22.16% Harkin, Lori</div>
<div class="t" style="left:1602.7px;top:1114.4px;font-size:12px;color:#555;font-weight:400;">36.39% Jones, Mike</div>
<div class="t" style="left:494.7px;width:300px;text-align:right;top:931.3px;font-size:12px;color:#555;font-weight:400;">Edwards, Priscilla M</div>
<div class="t" style="left:494.7px;width:300px;text-align:right;top:974.1px;font-size:12px;color:#555;font-weight:400;">Fripp, William</div>
<div class="t" style="left:494.7px;width:300px;text-align:right;top:1018.0px;font-size:12px;color:#555;font-weight:400;">Harkin, Lori</div>
<div class="t" style="left:494.7px;width:300px;text-align:right;top:1061.2px;font-size:12px;color:#555;font-weight:400;">Jones, Mike</div>
<div class="t" style="left:998.8px;top:932.1px;font-size:12.5px;color:#555;font-weight:400;">23:30</div>
<div class="t" style="left:1026.7px;top:974.2px;font-size:12.5px;color:#555;font-weight:400;">27:00</div>
<div class="t" style="left:1026.7px;top:1018.7px;font-size:12.5px;color:#555;font-weight:400;">27:00</div>
<div class="t" style="left:1168.9px;top:1062.2px;font-size:12.5px;color:#555;font-weight:400;">44:20</div>
<div class="t" style="left:651.0px;width:300px;text-align:center;top:1101.6px;font-size:12px;color:#555;font-weight:400;">0</div>
<div class="t" style="left:733.0px;width:300px;text-align:center;top:1101.6px;font-size:12px;color:#555;font-weight:400;">10</div>
<div class="t" style="left:815.0px;width:300px;text-align:center;top:1101.6px;font-size:12px;color:#555;font-weight:400;">20</div>
<div class="t" style="left:896.5px;width:300px;text-align:center;top:1101.6px;font-size:12px;color:#555;font-weight:400;">30</div>
<div class="t" style="left:978.5px;width:300px;text-align:center;top:1101.6px;font-size:12px;color:#555;font-weight:400;">40</div>
<div class="t" style="left:1060.8px;width:300px;text-align:center;top:1101.6px;font-size:12px;color:#555;font-weight:400;">50</div>
<div class="t" style="left:855.6px;width:300px;text-align:center;top:1121.1px;font-size:12px;color:#333;font-weight:700;">Actual Hours</div>
<div class="t" style="left:572px;top:995px;width:200px;text-align:center;font-size:12px;font-weight:700;color:#333;line-height:14px;transform:rotate(-90deg)">Employee Full Name</div>
<div class="t" style="left:1636.5px;width:300px;text-align:right;top:903.7px;font-size:12px;color:#555;font-weight:400;">5</div>
<div class="t" style="left:1636.5px;width:300px;text-align:right;top:937.4px;font-size:12px;color:#555;font-weight:400;">4</div>
<div class="t" style="left:1636.5px;width:300px;text-align:right;top:971.3px;font-size:12px;color:#555;font-weight:400;">3</div>
<div class="t" style="left:1636.5px;width:300px;text-align:right;top:1005.8px;font-size:12px;color:#555;font-weight:400;">2</div>
<div class="t" style="left:1636.5px;width:300px;text-align:right;top:1040.2px;font-size:12px;color:#555;font-weight:400;">1</div>
<div class="t" style="left:1636.5px;width:300px;text-align:right;top:1073.8px;font-size:12px;color:#555;font-weight:400;">0</div>
<div class="t" style="left:1839.3px;width:300px;text-align:center;top:1087.4px;font-size:12px;color:#555;font-weight:400;">Project 1024F</div>
<div class="t" style="left:1923.4px;width:300px;text-align:center;top:1087.4px;font-size:12px;color:#555;font-weight:400;">Project 1701</div>
<div class="t" style="left:2006.0px;width:300px;text-align:center;top:1087.4px;font-size:12px;color:#555;font-weight:400;">Project 1907</div>
<div class="t" style="left:2090.2px;width:300px;text-align:center;top:1087.4px;font-size:12px;color:#555;font-weight:400;">Project 2299X</div>
<div class="t" style="left:2174.0px;width:300px;text-align:center;top:1087.4px;font-size:12px;color:#555;font-weight:400;">Project 2332</div>
<div class="t" style="left:2257.2px;width:300px;text-align:center;top:1087.4px;font-size:12px;color:#555;font-weight:400;">Project</div>
<div class="t" style="left:2257.2px;width:300px;text-align:center;top:1101.5px;font-size:12px;color:#555;font-weight:400;">PR-323A</div>
<div class="t" style="left:2048.0px;width:300px;text-align:center;top:1121.8px;font-size:12px;color:#333;font-weight:700;">Project</div>
<div class="t" style="left:1817px;top:987.6px;width:200px;text-align:center;font-size:12px;font-weight:700;color:#333;line-height:14px;transform:rotate(-90deg)">Recuento único</div>
<div class="t" style="left:1979.3px;top:1028.4px;width:20px;text-align:center;font-size:12px;color:#555;line-height:14px;transform:rotate(-90deg)">1</div>
<div class="t" style="left:2063.4px;top:926.4px;width:20px;text-align:center;font-size:12px;color:#555;line-height:14px;transform:rotate(-90deg)">4</div>
<div class="t" style="left:2146px;top:926.4px;width:20px;text-align:center;font-size:12px;color:#555;line-height:14px;transform:rotate(-90deg)">4</div>
<div class="t" style="left:2230.2px;top:1028.4px;width:20px;text-align:center;font-size:12px;color:#555;line-height:14px;transform:rotate(-90deg)">1</div>
<div class="t" style="left:2314px;top:926.4px;width:20px;text-align:center;font-size:12px;color:#555;line-height:14px;transform:rotate(-90deg)">4</div>
<div class="t" style="left:2397.2px;top:926.4px;width:20px;text-align:center;font-size:12px;color:#555;line-height:14px;transform:rotate(-90deg)">4</div>
</body></html>
